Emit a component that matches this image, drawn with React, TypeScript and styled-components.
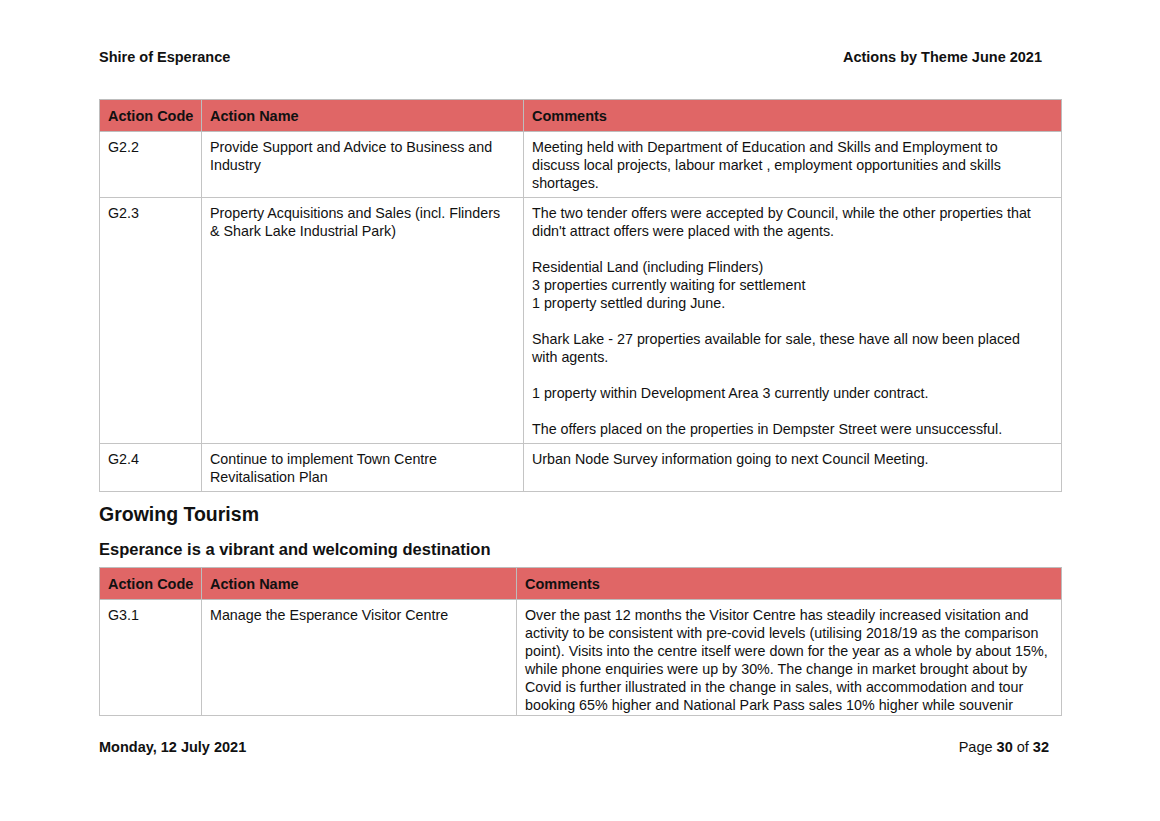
import React from 'react';
import styled, {createGlobalStyle} from 'styled-components';

const GlobalStyle = createGlobalStyle`
  html, body {
    margin: 0;
    padding: 0;
    background: #fff;
  }
  body {
    font-family: "Liberation Sans", Arial, sans-serif;
    color: #111;
  }
`

const Page = styled.div`
  width: 1160px;
  height: 821px;
  box-sizing: border-box;
  padding: 48px 98px 0 99px;
  background: #fff;
  overflow: hidden;
`
const TopBar = styled.header`
  display: flex;
  justify-content: space-between;
  font-size: 14.5px;
  font-weight: bold;
  line-height: 18px;
  padding-right: 20px;
  margin-bottom: 33px;
`
const Table = styled.table`
  width: 963px;
  border-collapse: collapse;
  table-layout: fixed;
  font-size: 14.3px;
  line-height: 18px;
`
const Head = styled.th`
  background: #e06666;
  border: 1px solid #bdbdbd;
  text-align: left;
  font-weight: bold;
  font-size: 14.5px;
  white-space: nowrap;
  height: 32px;
  padding: 0 7px 0 8px;
  box-sizing: border-box;
  vertical-align: middle;
`
const Cell = styled.td<{$tail?: boolean}>`
  border: 1px solid #c4c4c4;
  vertical-align: top;
  white-space: pre-line;
  padding: 6px 8px ${p => p.$tail ? '1px' : '5px'} 8px;
`
const Para = styled.p`
  margin: 0;
  & + & {
    margin-top: 18px;
  }
`
const Heading = styled.h2`
  font-size: 19.5px;
  line-height: 24px;
  font-weight: bold;
  margin: 10px 0 0;
`
const SubHeading = styled.h3`
  font-size: 16.5px;
  line-height: 20px;
  font-weight: bold;
  margin: 13px 0 8px;
`
const Footer = styled.footer`
  display: flex;
  justify-content: space-between;
  font-size: 14.5px;
  line-height: 18px;
  font-weight: bold;
  padding-right: 13px;
  margin-top: 22px;
`
const PageNum = styled.span`
  font-weight: normal;
  b {
    font-weight: bold;
  }
`

type Row = {code: string; name: string; comments: string[]; tail?: boolean}

// line breaks follow the printed report
const growingBusiness: Row[] = [
  {
    code: 'G2.2',
    name: 'Provide Support and Advice to Business and\nIndustry',
    comments: ['Meeting held with Department of Education and Skills and Employment to\ndiscuss local projects, labour market , employment opportunities and skills\nshortages.'],
  },
  {
    code: 'G2.3',
    name: 'Property Acquisitions and Sales (incl. Flinders\n& Shark Lake Industrial Park)',
    comments: [
      "The two tender offers were accepted by Council, while the other properties that\ndidn't attract offers were placed with the agents.",
      'Residential Land (including Flinders)\n3 properties currently waiting for settlement\n1 property settled during June.',
      'Shark Lake - 27 properties available for sale, these have all now been placed\nwith agents.',
      '1 property within Development Area 3 currently under contract.',
      'The offers placed on the properties in Dempster Street were unsuccessful.',
    ],
  },
  {
    code: 'G2.4',
    name: 'Continue to implement Town Centre\nRevitalisation Plan',
    comments: ['Urban Node Survey information going to next Council Meeting.'],
  },
]

// the page break cuts this comment off after "souvenir"
const growingTourism: Row[] = [
  {
    code: 'G3.1',
    name: 'Manage the Esperance Visitor Centre',
    comments: ['Over the past 12 months the Visitor Centre has steadily increased visitation and\nactivity to be consistent with pre-covid levels (utilising 2018/19 as the comparison\npoint). Visits into the centre itself were down for the year as a whole by about 15%,\nwhile phone enquiries were up by 30%. The change in market brought about by\nCovid is further illustrated in the change in sales, with accommodation and tour\nbooking 65% higher and National Park Pass sales 10% higher while souvenir'],
    tail: true,
  },
]

const ActionTable: React.FC<{rows: Row[]; nameWidth: number}> = ({rows, nameWidth}) => (
  <Table>
    <colgroup>
      <col style={{width: 102}} />
      <col style={{width: nameWidth}} />
      <col />
    </colgroup>
    <thead>
      <tr>
        <Head>Action Code</Head>
        <Head>Action Name</Head>
        <Head>Comments</Head>
      </tr>
    </thead>
    <tbody>
      {rows.map(r => (
        <tr key={r.code}>
          <Cell $tail={r.tail}>{r.code}</Cell>
          <Cell $tail={r.tail}>{r.name}</Cell>
          <Cell $tail={r.tail}>
            {r.comments.map((c, i) => <Para key={i}>{c}</Para>)}
          </Cell>
        </tr>
      ))}
    </tbody>
  </Table>
)

export default function App() {
  return (
    <>
      <GlobalStyle />
      <Page>
        <TopBar>
          <span>Shire of Esperance</span>
          <span>Actions by Theme June 2021</span>
        </TopBar>
        <ActionTable rows={growingBusiness} nameWidth={322} />
        <Heading>Growing Tourism</Heading>
        <SubHeading>Esperance is a vibrant and welcoming destination</SubHeading>
        <ActionTable rows={growingTourism} nameWidth={315} />
        <Footer>
          <span>Monday, 12 July 2021</span>
          <PageNum>Page <b>30</b> of <b>32</b></PageNum>
        </Footer>
      </Page>
    </>
  )
}
